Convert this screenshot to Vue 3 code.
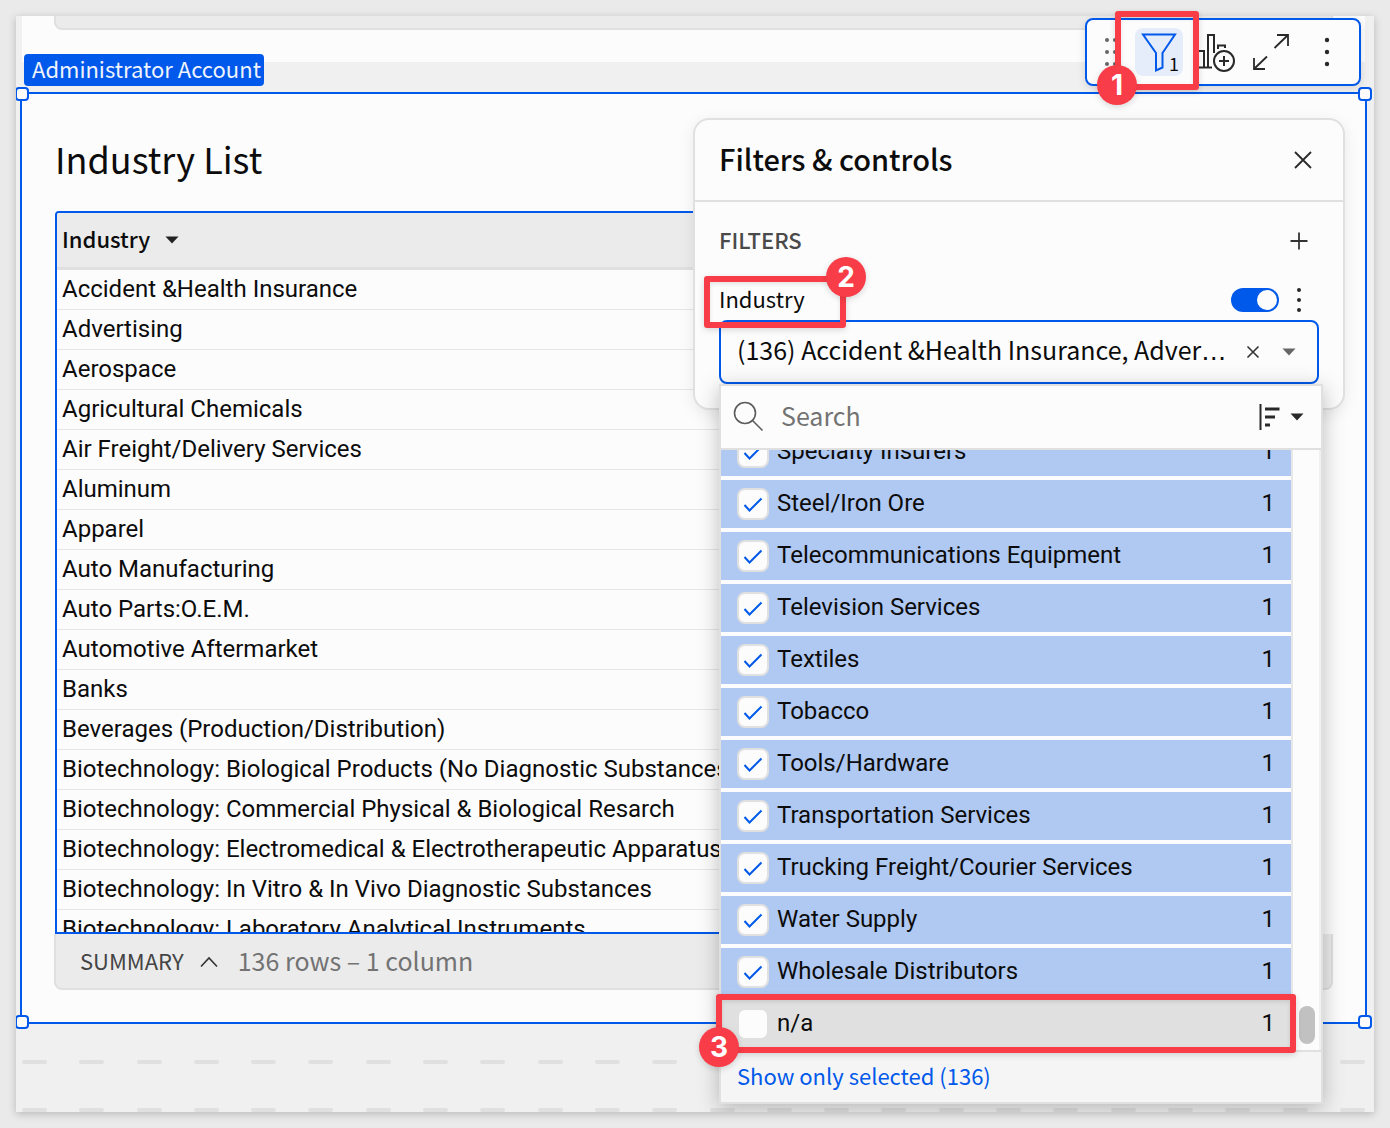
<script setup>
import { ref } from 'vue'

const industries = [
  'Accident &Health Insurance',
  'Advertising',
  'Aerospace',
  'Agricultural Chemicals',
  'Air Freight/Delivery Services',
  'Aluminum',
  'Apparel',
  'Auto Manufacturing',
  'Auto Parts:O.E.M.',
  'Automotive Aftermarket',
  'Banks',
  'Beverages (Production/Distribution)',
  'Biotechnology: Biological Products (No Diagnostic Substances)',
  'Biotechnology: Commercial Physical & Biological Resarch',
  'Biotechnology: Electromedical & Electrotherapeutic Apparatus',
  'Biotechnology: In Vitro & In Vivo Diagnostic Substances',
  'Biotechnology: Laboratory Analytical Instruments',
]

const options = ref([
  { name: 'Specialty Insurers', count: 1, checked: true },
  { name: 'Steel/Iron Ore', count: 1, checked: true },
  { name: 'Telecommunications Equipment', count: 1, checked: true },
  { name: 'Television Services', count: 1, checked: true },
  { name: 'Textiles', count: 1, checked: true },
  { name: 'Tobacco', count: 1, checked: true },
  { name: 'Tools/Hardware', count: 1, checked: true },
  { name: 'Transportation Services', count: 1, checked: true },
  { name: 'Trucking Freight/Courier Services', count: 1, checked: true },
  { name: 'Water Supply', count: 1, checked: true },
  { name: 'Wholesale Distributors', count: 1, checked: true },
  { name: 'n/a', count: 1, checked: false },
])

const filterOn = ref(true)
const query = ref('')
const corners = ['tl', 'tr', 'bl', 'br']
</script>

<template>
  <div class="page">
    <main class="canvas">
      <div class="previous">
        <div class="previous-footer"></div>
      </div>

      <section class="element">
        <span class="tag">Administrator Account</span>
        <h1 class="title">Industry List</h1>

        <div class="table-view">
          <table class="table">
            <thead>
              <tr>
                <th scope="col">
                  <button class="sort" type="button">
                    <span class="text">Industry</span>
                    <svg width="14" height="8" viewBox="0 0 14 8"><path d="M0.5 0.5h13L7 7.5z" fill="#222" /></svg>
                  </button>
                </th>
              </tr>
            </thead>
            <tbody>
              <tr v-for="name in industries" :key="name">
                <td>{{ name }}</td>
              </tr>
            </tbody>
          </table>
        </div>

        <footer class="summary">
          <button class="summary-toggle" type="button">
            <span class="text">SUMMARY</span>
            <svg width="18" height="12" viewBox="0 0 18 12"><path d="M1 10.500 9 2l8 8.500" fill="none" stroke="#333" stroke-width="1.6" /></svg>
          </button>
          <span class="summary-count text">136 rows – 1 column</span>
        </footer>

        <span v-for="c in corners" :key="c" class="handle" :class="c"></span>

        <aside class="panel">
          <header class="panel-header">
            <h2 class="text">Filters &amp; controls</h2>
            <button class="icon-button close" type="button" aria-label="Close">
              <svg width="20" height="20" viewBox="0 0 20 20"><path d="M2 2l16 16M18 2 2 18" stroke="#292929" stroke-width="1.8" /></svg>
            </button>
          </header>
          <div class="panel-body">
            <div class="panel-row">
              <h3 class="text">FILTERS</h3>
              <button class="icon-button" type="button" aria-label="Add filter">
                <svg width="20" height="20" viewBox="0 0 20 20"><path d="M10 1.500v17M1.500 10h17" stroke="#333" stroke-width="1.8" /></svg>
              </button>
            </div>
            <div class="panel-row filter-row">
              <label class="text" for="filter-on">Industry</label>
              <input id="filter-on" v-model="filterOn" class="switch" type="checkbox" role="switch" />
              <button class="icon-button" type="button" aria-label="Filter menu">
                <svg width="6" height="26" viewBox="0 0 6 26" fill="#292929"><circle cx="3" cy="3" r="2" /><circle cx="3" cy="13" r="2" /><circle cx="3" cy="23" r="2" /></svg>
              </button>
            </div>
            <div class="select-wrap">
              <div class="select">
                <button class="select-value text" type="button" aria-haspopup="listbox" aria-expanded="true"><span>(136) Accident &amp;Health Insurance, Advertising, Aerospace</span></button>
                <button class="select-icon" type="button" aria-label="Clear">
                  <svg width="14" height="14" viewBox="0 0 14 14"><path d="M1.500 1.500l11 11M12.500 1.500l-11 11" stroke="#333" stroke-width="1.6" /></svg>
                </button>
                <button class="select-icon" type="button" aria-label="Open list">
                  <svg width="14" height="8" viewBox="0 0 14 8"><path d="M0.500 0.500h13L7 7.500z" fill="#666" /></svg>
                </button>
              </div>

              <div class="dropdown">
                <div class="search">
                  <svg width="32" height="32" viewBox="0 0 32 32" fill="none" stroke="#5c5c5c" stroke-width="1.6"><circle cx="12" cy="12" r="10.500" /><path d="M19.500 19.500 29.500 29.500" /></svg>
                  <input v-model="query" class="text" type="text" placeholder="Search" aria-label="Search" />
                  <button class="order" type="button" aria-label="Sort order">
                    <svg width="22" height="26" viewBox="0 0 22 26"><path d="M1.500 0v26" stroke="#292929" stroke-width="2" /><path d="M6 5h14.500M6 13h10M6 21h5" stroke="#292929" stroke-width="3" /></svg>
                    <svg width="14" height="8" viewBox="0 0 14 8"><path d="M0.500 0.500h13L7 7.500z" fill="#292929" /></svg>
                  </button>
                </div>
                <div class="options">
                  <ul class="option-list">
                    <li v-for="o in options" :key="o.name" class="option" :class="{ checked: o.checked }">
                      <label>
                        <span class="check">
                          <input v-model="o.checked" type="checkbox" />
                          <svg v-if="o.checked" width="20" height="16" viewBox="0 0 20 16"><path d="M1.500 9 6.500 14.500 18.500 2.500" fill="none" stroke="#0059ea" stroke-width="2" /></svg>
                        </span>
                        <span class="name">{{ o.name }}</span>
                        <span class="count">{{ o.count }}</span>
                      </label>
                    </li>
                  </ul>
                  <div class="gutter"><div class="thumb"></div></div>
                </div>
                <div class="dropdown-footer">
                  <button class="text" type="button">Show only selected (136)</button>
                </div>
              </div>
            </div>
          </div>
        </aside>
      </section>

      <div class="grid-row" v-for="r in 2" :key="r">
        <i v-for="n in 24" :key="n"></i>
      </div>

      <div class="toolbar">
        <svg class="grip" width="14" height="30" viewBox="0 0 14 30" fill="#666"><circle cx="3" cy="3" r="2" /><circle cx="11" cy="3" r="2" /><circle cx="3" cy="15" r="2" /><circle cx="11" cy="15" r="2" /><circle cx="3" cy="27" r="2" /><circle cx="11" cy="27" r="2" /></svg>
        <button class="tool filter" type="button" aria-label="Filters">
          <svg width="48" height="48" viewBox="0 0 48 48"><path d="M8 6.500h32L27.500 25v14.500L21 42.500V25z" fill="none" stroke="#0059ea" stroke-width="2" /></svg>
          <span>1</span>
        </button>
        <button class="tool" type="button" aria-label="Add chart">
          <svg width="48" height="48" viewBox="0 0 48 48" fill="none" stroke="#292929" stroke-width="2"><path d="M5 39.500h16M7 39.500V23h6v16.500M17 39.500V7h6v18M27 21v-3.500h7V20" /><circle cx="33" cy="33" r="10" /><path d="M33 28v10M28 33h10" /></svg>
        </button>
        <button class="tool" type="button" aria-label="Maximize">
          <svg width="48" height="48" viewBox="0 0 48 48" fill="none" stroke="#292929" stroke-width="1.8"><path d="M27.500 20 41 7M30 7h11v11M20 28.500 7 41M7 30v11h11" /></svg>
        </button>
        <button class="tool" type="button" aria-label="More">
          <svg width="48" height="48" viewBox="0 0 48 48" fill="#292929"><circle cx="24" cy="12" r="2.200" /><circle cx="24" cy="24" r="2.200" /><circle cx="24" cy="36" r="2.200" /></svg>
        </button>
      </div>
    </main>

    <div class="callout one"><b>1</b></div>
    <div class="callout two"><b>2</b></div>
    <div class="callout three"><b>3</b></div>
  </div>
</template>

<style>
body {
  margin: 0;
  background: #eaeaea;
}
</style>

<style scoped>
.page {
  position: relative;
  padding: 16px;
  font-family: "Noto Sans CJK SC", sans-serif;
  font-size: 22px;
  color: #0c0c0c;
}
.page *,
.page {
  box-sizing: border-box;
}
button {
  margin: 0;
  padding: 0;
  border: 0;
  background: none;
  font: inherit;
  color: inherit;
  cursor: pointer;
}
input {
  margin: 0;
}
h1,
h2,
h3 {
  margin: 0;
}
svg {
  display: block;
  flex: none;
}
.page .text {
  padding-bottom: 4px;
}

.canvas {
  position: relative;
  overflow: hidden;
  background: #f0f0f0;
  box-shadow: 0 2px 8px rgba(0, 0, 0, 0.22);
}
.previous {
  height: 46px;
  margin: 0 9px 30px 6px;
  padding: 0 32px;
  background: #fcfcfc;
}
.previous-footer {
  height: 14px;
  border: 2px solid #e0e0e0;
  border-top: 0;
  border-radius: 0 0 8px 8px;
  background: #ebebeb;
}

.element {
  position: relative;
  margin: 0 7px 0 4px;
  padding: 44px 32px 32px 33px;
  border: 2px solid #0059ea;
  background: #fcfcfc;
}
.tag {
  position: absolute;
  left: 2px;
  top: -40px;
  height: 32px;
  padding: 0 3px 0 8px;
  border-radius: 4px;
  background: #0059ea;
  color: #f0f4fc;
  line-height: 28px;
  white-space: nowrap;
}
.title {
  margin-bottom: 33px;
  font-size: 36px;
  font-weight: 400;
  line-height: 40px;
}
.handle {
  position: absolute;
  width: 14px;
  height: 14px;
  border: 2px solid #0059ea;
  border-radius: 4px;
  background: #fcfcfc;
}
.tl { left: -7px; top: -7px; }
.tr { right: -7px; top: -7px; }
.bl { left: -7px; bottom: -7px; }
.br { right: -7px; bottom: -7px; }

.table-view {
  height: 723px;
  margin-right: 16px;
  overflow: hidden;
  border: 2px solid #0059ea;
  border-radius: 4px 4px 0 0;
}
.table {
  width: 100%;
  border-collapse: separate;
  border-spacing: 0;
}
.table th {
  height: 57px;
  padding: 0 5px;
  border-bottom: 3px solid #e0e0e0;
  background: #ebebeb;
  text-align: left;
  font-weight: 500;
}
.sort {
  display: flex;
  align-items: center;
  gap: 15px;
  line-height: 32px;
}
.table td {
  height: 40px;
  padding: 0 5px 2px;
  border-bottom: 1px solid #e6e6e6;
  font: 24px/36px Roboto, sans-serif;
  white-space: nowrap;
}
.summary {
  display: flex;
  align-items: center;
  gap: 20px;
  height: 56px;
  margin-left: -1px;
  padding: 2px 24px 0;
  border: 2px solid #e0e0e0;
  border-top: 0;
  border-radius: 0 0 8px 8px;
  background: #ebebeb;
}
.summary-toggle {
  display: flex;
  align-items: center;
  gap: 16px;
  color: #444;
}
.summary-count {
  font-size: 25px;
  line-height: 32px;
  color: #737373;
}

.panel {
  position: absolute;
  top: 24px;
  right: 20px;
  width: 652px;
  border: 2px solid #e0e0e0;
  border-radius: 16px;
  background: #fcfcfc;
  box-shadow: 0 4px 16px rgba(0, 0, 0, 0.08);
}
.panel-header {
  display: flex;
  align-items: center;
  justify-content: space-between;
  height: 82px;
  padding: 0 24px;
  border-bottom: 2px solid #e0e0e0;
}
h2 {
  font-size: 29px;
  font-weight: 500;
  line-height: 40px;
}
.panel-body {
  padding: 19px 24px 24px;
}
.panel-row {
  display: flex;
  align-items: center;
  justify-content: space-between;
  height: 40px;
}
.filter-row {
  margin-top: 19px;
}
.filter-row label {
  flex: 1;
}
h3 {
  font-size: 22px;
  font-weight: 500;
  color: #4a4a4a;
}
.icon-button {
  display: flex;
  align-items: center;
  justify-content: center;
  width: 40px;
  height: 40px;
}
.icon-button.close {
  width: 32px;
}
.switch {
  appearance: none;
  display: flex;
  align-items: center;
  justify-content: flex-end;
  width: 48px;
  height: 24px;
  padding: 0 2px;
  border-radius: 12px;
  background: #0059ea;
}
.switch::before {
  content: "";
  width: 20px;
  height: 20px;
  border-radius: 50%;
  background: #fcfcfc;
}
.select-wrap {
  position: relative;
}
.select {
  display: flex;
  align-items: center;
  height: 64px;
  padding: 0 10px 0 16px;
  border: 2px solid #0059ea;
  border-radius: 8px;
}
/* The overflow ellipsis takes the button's own font, whose dots sit on the baseline. */
.select-value {
  flex: 1;
  min-width: 0;
  overflow: hidden;
  font-family: "DejaVu Sans", sans-serif;
  font-size: 25px;
  line-height: 40px;
  text-align: left;
  text-overflow: ellipsis;
  white-space: nowrap;
}
.select-value span {
  font-family: "Noto Sans CJK SC", sans-serif;
}
.select-icon {
  display: flex;
  align-items: center;
  justify-content: center;
  width: 36px;
  height: 40px;
}

.dropdown {
  position: absolute;
  top: 100%;
  left: 0;
  right: -4px;
  border: 2px solid #e0e0e0;
  background: #fcfcfc;
  box-shadow: 0 4px 20px rgba(0, 0, 0, 0.25);
}
.search {
  display: flex;
  align-items: center;
  height: 64px;
  padding: 0 17px 0 12px;
  border-bottom: 2px solid #e0e0e0;
}
.search input {
  flex: 1;
  min-width: 0;
  padding: 0 16px;
  border: 0;
  outline: 0;
  background: none;
  font: inherit;
  font-size: 25px;
  line-height: 36px;
  color: #0c0c0c;
}
.search input::placeholder {
  color: #737373;
  opacity: 1;
}
.order {
  display: flex;
  align-items: center;
  gap: 9px;
}
.options {
  display: flex;
  height: 600px;
}
.option-list {
  flex: 1;
  display: flex;
  flex-direction: column;
  justify-content: flex-end;
  gap: 4px;
  margin: 0;
  padding: 0 0 2px;
  overflow: hidden;
  list-style: none;
}
.option {
  flex: none;
  background: #e0e0e0;
  font: 24px/28px Roboto, sans-serif;
}
.option.checked {
  background: #b0c9f3;
}
.option label {
  display: flex;
  align-items: center;
  height: 48px;
  padding: 0 16px;
}
.check {
  display: grid;
  place-items: center;
  margin-right: 8px;
}
.check > * {
  grid-area: 1 / 1;
}
.check input {
  appearance: none;
  width: 32px;
  height: 32px;
  border: 2px solid #e0e0e0;
  border-radius: 8px;
  background: #fcfcfc;
}
.check svg {
  z-index: 1;
}
.name {
  flex: 1;
}
.name,
.count {
  padding-bottom: 2px;
}
.gutter {
  display: flex;
  flex-direction: column;
  justify-content: flex-end;
  width: 30px;
  padding: 0 4px 6px 6px;
  border-left: 2px solid #e8e8e8;
  border-right: 2px solid #f0f0f0;
}
.thumb {
  height: 38px;
  border-radius: 8px;
  background: #c1c1c1;
}
.dropdown-footer {
  height: 52px;
  padding: 0 16px;
  border-top: 2px solid #e0e0e0;
  background: #f5f5f5;
}
.dropdown-footer button {
  height: 50px;
  color: #0059ea;
}

.grid-row {
  display: flex;
  justify-content: space-between;
  margin: 36px 9px 0 6px;
}
.grid-row + .grid-row {
  margin-top: 44px;
}
.grid-row i {
  width: 25px;
  height: 4px;
  border-radius: 2px;
  background: #e0e0e0;
}

.toolbar {
  position: absolute;
  top: 2px;
  right: 13px;
  display: flex;
  align-items: center;
  gap: 8px;
  height: 68px;
  padding: 0 8px 0 17px;
  border: 2px solid #0059ea;
  border-radius: 8px;
  background: #fcfcfc;
  box-shadow: 0 2px 8px rgba(0, 0, 0, 0.12);
}
.grip {
  margin-right: 9px;
}
.tool {
  position: relative;
  width: 48px;
  height: 48px;
  border-radius: 8px;
}
.tool.filter {
  background: #e6edfa;
}
.tool span {
  position: absolute;
  right: 4px;
  bottom: 1px;
  font-size: 18px;
  line-height: 24px;
}

.callout {
  position: absolute;
  border: 6px solid #f93d48;
  border-radius: 3px;
  box-shadow: 0 2px 6px rgba(0, 0, 0, 0.15), inset 0 2px 4px rgba(0, 0, 0, 0.1);
  pointer-events: none;
}
.callout b {
  position: absolute;
  width: 40px;
  height: 40px;
  border-radius: 50%;
  background: #f93d48;
  box-shadow: 0 2px 6px rgba(0, 0, 0, 0.15);
  color: #fff;
  font: 700 28px/40px Inter, sans-serif;
  text-align: center;
}
.one {
  top: 11px;
  right: 191px;
  width: 84px;
  height: 79px;
}
.one b {
  left: -24px;
  bottom: -21px;
}
.two {
  top: 276px;
  right: 544px;
  width: 142px;
  height: 52px;
}
.two b {
  right: -26px;
  top: -25px;
}
.three {
  top: 994px;
  right: 94px;
  width: 580px;
  height: 59px;
}
.three b {
  left: -23px;
  bottom: -20px;
}
</style>
